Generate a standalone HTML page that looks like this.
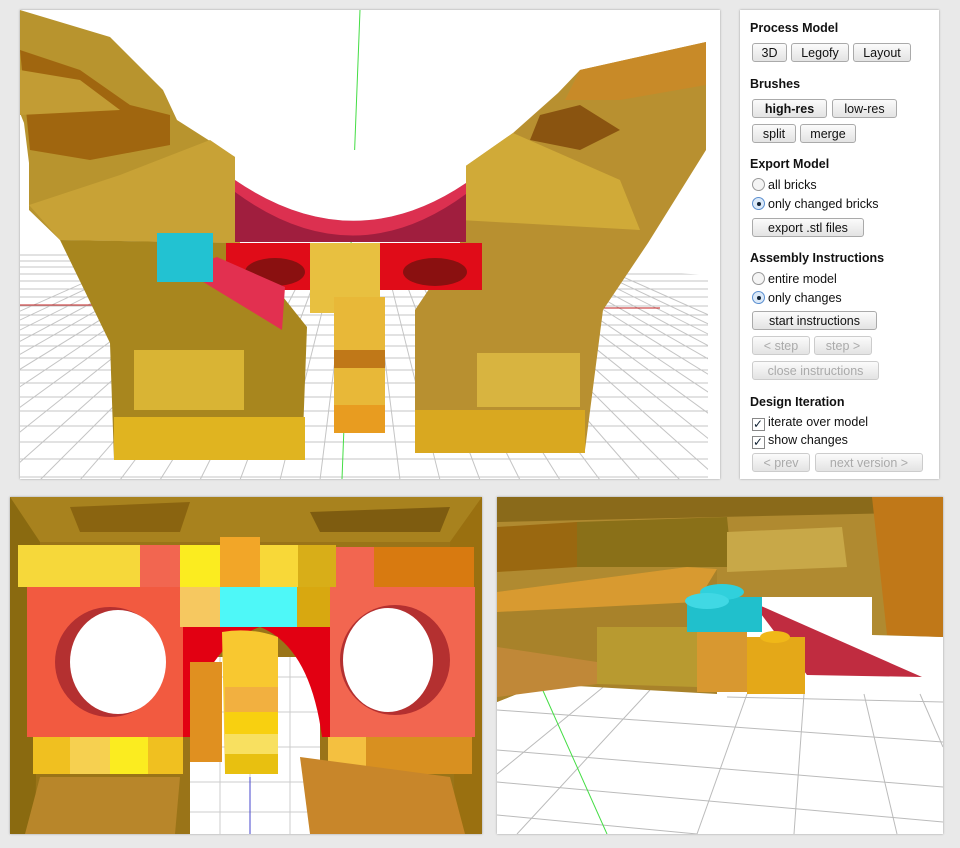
<!DOCTYPE html>
<html><head><style>
body{margin:0;width:960px;height:848px;background:#e9e9e9;position:relative;overflow:hidden;font-family:"Liberation Sans",sans-serif}
.v{position:absolute;background:#fff;overflow:hidden;box-shadow:0 0 2px #999}
.p{position:absolute;left:740px;top:10px;width:199px;height:469px;background:#fff;box-shadow:0 0 2px #999;font-size:12.5px;color:#111}
.p h{display:block;position:absolute;left:10px;font-weight:bold;font-size:12.5px}
.b{position:absolute;height:19px;border:1px solid #aaa;border-radius:3px;background:linear-gradient(#fbfbfb,#e3e3e3);font-size:12.5px;line-height:19px;text-align:center;box-sizing:border-box}
.d{color:#aaa;border-color:#ccc}
.r{position:absolute;left:12px;font-size:12.5px}
.r i{display:inline-block;width:11px;height:11px;border:1px solid #999;border-radius:50%;vertical-align:-2px;margin-right:3px;background:#f4f4f4;position:relative}
.r i.on:after{content:"";position:absolute;left:3.5px;top:3.5px;width:4px;height:4px;border-radius:50%;background:#123}
.r i.on{border-color:#5b8fd0;background:#dbe9f8}
.r s{display:inline-block;width:11px;height:11px;border:1px solid #888;vertical-align:-2px;margin-right:3px;text-decoration:none;font-size:12px;line-height:10px;color:#123}
</style></head><body>
<div class="v" style="left:20px;top:10px;width:700px;height:469px">
<svg width="700" height="469">
<defs><clipPath id="fl"><polygon points="0,240 120,240 600,260 688,265 688,469 0,469"/></clipPath></defs>
<g clip-path="url(#fl)" stroke="#c4c4c4" stroke-width="1">
<line x1="0" y1="245" x2="700" y2="245"/><line x1="0" y1="251" x2="700" y2="251"/><line x1="0" y1="257" x2="700" y2="257"/><line x1="0" y1="264" x2="700" y2="264"/><line x1="0" y1="271" x2="700" y2="271"/><line x1="0" y1="279" x2="700" y2="279"/><line x1="0" y1="287" x2="700" y2="287"/><line x1="0" y1="296" x2="700" y2="296"/><line x1="0" y1="305" x2="700" y2="305"/><line x1="0" y1="315" x2="700" y2="315"/><line x1="0" y1="325" x2="700" y2="325"/><line x1="0" y1="336" x2="700" y2="336"/><line x1="0" y1="348" x2="700" y2="348"/><line x1="0" y1="360" x2="700" y2="360"/><line x1="0" y1="373" x2="700" y2="373"/><line x1="0" y1="387" x2="700" y2="387"/><line x1="0" y1="401" x2="700" y2="401"/><line x1="0" y1="416" x2="700" y2="416"/><line x1="0" y1="432" x2="700" y2="432"/><line x1="0" y1="449" x2="700" y2="449"/><line x1="0" y1="467" x2="700" y2="467"/>
<g transform="translate(340,150)">
<line x1="0" y1="0" x2="-720" y2="320"/><line x1="0" y1="0" x2="-680" y2="320"/><line x1="0" y1="0" x2="-640" y2="320"/><line x1="0" y1="0" x2="-600" y2="320"/><line x1="0" y1="0" x2="-560" y2="320"/><line x1="0" y1="0" x2="-520" y2="320"/><line x1="0" y1="0" x2="-480" y2="320"/><line x1="0" y1="0" x2="-440" y2="320"/><line x1="0" y1="0" x2="-400" y2="320"/><line x1="0" y1="0" x2="-360" y2="320"/><line x1="0" y1="0" x2="-320" y2="320"/><line x1="0" y1="0" x2="-280" y2="320"/><line x1="0" y1="0" x2="-240" y2="320"/><line x1="0" y1="0" x2="-200" y2="320"/><line x1="0" y1="0" x2="-160" y2="320"/><line x1="0" y1="0" x2="-120" y2="320"/><line x1="0" y1="0" x2="-80" y2="320"/><line x1="0" y1="0" x2="-40" y2="320"/><line x1="0" y1="0" x2="40" y2="320"/><line x1="0" y1="0" x2="80" y2="320"/><line x1="0" y1="0" x2="120" y2="320"/><line x1="0" y1="0" x2="160" y2="320"/><line x1="0" y1="0" x2="200" y2="320"/><line x1="0" y1="0" x2="240" y2="320"/><line x1="0" y1="0" x2="280" y2="320"/><line x1="0" y1="0" x2="320" y2="320"/><line x1="0" y1="0" x2="360" y2="320"/><line x1="0" y1="0" x2="400" y2="320"/><line x1="0" y1="0" x2="440" y2="320"/><line x1="0" y1="0" x2="480" y2="320"/><line x1="0" y1="0" x2="520" y2="320"/><line x1="0" y1="0" x2="560" y2="320"/><line x1="0" y1="0" x2="600" y2="320"/><line x1="0" y1="0" x2="640" y2="320"/><line x1="0" y1="0" x2="680" y2="320"/><line x1="0" y1="0" x2="720" y2="320"/></g></g>
<line x1="0" y1="295" x2="90" y2="295" stroke="#c02020"/><line x1="580" y1="298" x2="640" y2="298" stroke="#c02020"/>
<line x1="340" y1="0" x2="322" y2="469" stroke="#4d4" />
<polygon points="0,0 90,27 143,80 157,110 215,147 220,233 40,230 9,200 9,153 4,113 0,103" fill="#b8942e"/>
<polygon points="0,40 60,60 110,95 150,105 150,135 70,150 10,140" fill="#a0660f"/>
<polygon points="0,60 60,70 100,100 0,105" fill="#c29c34"/>
<polygon points="9,195 100,165 190,130 215,147 220,233 40,230" fill="#c8a236"/>
<polygon points="40,230 220,233 287,317 282,450 94,450 90,333" fill="#a8861e"/>
<rect x="114" y="340" width="110" height="60" fill="#d9b434"/>
<rect x="94" y="407" width="191" height="43" fill="#e0b420"/>
<polygon points="560,60 686,32 686,140 628,233 583,300 565,440 395,443 395,300 440,233 440,160 493,123 538,83" fill="#b89030"/>
<polygon points="520,105 560,95 600,120 560,140 510,130" fill="#8a5410"/>
<polygon points="560,60 686,32 686,75 600,90 545,90" fill="#c88a28"/>
<polygon points="440,160 493,123 600,170 620,220 440,210" fill="#d0aa38"/>
<rect x="457" y="343" width="103" height="54" fill="#d8b440"/>
<rect x="395" y="400" width="170" height="43" fill="#d9a820"/>
<polygon points="215,170 446,173 446,232 215,232" fill="#a01e3e"/>
<path d="M215 170 Q332 250 446 173 L446 184 Q332 268 215 182Z" fill="#dc3050"/>
<path d="M215 170 Q332 250 446 173 L446 140 L215 140Z" fill="#fff"/>
<polygon points="206,233 462,233 462,280 206,280" fill="#e00c18"/>
<ellipse cx="255" cy="262" rx="30" ry="14" fill="#8a1010"/><ellipse cx="415" cy="262" rx="32" ry="14" fill="#8a1010"/>
<rect x="290" y="233" width="70" height="70" fill="#e8c040"/>
<rect x="314" y="287" width="51" height="136" fill="#e8b838"/>
<rect x="314" y="340" width="51" height="18" fill="#c07818"/>
<rect x="314" y="395" width="51" height="28" fill="#e89c20"/>
<polygon points="179,253 197,247 265,277 262,320 180,270" fill="#e23050"/>
<rect x="137" y="223" width="56" height="49" fill="#22c2d2"/>
</svg></div>
<div class="p">
<h style="top:11px">Process Model</h>
<div class="b" style="left:12px;top:33px;width:35px">3D</div><div class="b" style="left:51px;top:33px;width:58px">Legofy</div><div class="b" style="left:113px;top:33px;width:58px">Layout</div>
<h style="top:67px">Brushes</h>
<div class="b" style="left:12px;top:89px;width:75px;font-weight:bold">high-res</div><div class="b" style="left:92px;top:89px;width:65px">low-res</div>
<div class="b" style="left:12px;top:114px;width:44px">split</div><div class="b" style="left:60px;top:114px;width:56px">merge</div>
<h style="top:147px">Export Model</h>
<div class="r" style="top:168px"><i></i>all bricks</div>
<div class="r" style="top:187px"><i class="on"></i>only changed bricks</div>
<div class="b" style="left:12px;top:208px;width:112px">export .stl files</div>
<h style="top:241px">Assembly Instructions</h>
<div class="r" style="top:262px"><i></i>entire model</div>
<div class="r" style="top:281px"><i class="on"></i>only changes</div>
<div class="b" style="left:12px;top:301px;width:125px">start instructions</div>
<div class="b d" style="left:12px;top:326px;width:58px">&lt; step</div><div class="b d" style="left:74px;top:326px;width:58px">step &gt;</div>
<div class="b d" style="left:12px;top:351px;width:127px">close instructions</div>
<h style="top:385px">Design Iteration</h>
<div class="r" style="top:405px"><s>✓</s>iterate over model</div>
<div class="r" style="top:423px"><s>✓</s>show changes</div>
<div class="b d" style="left:12px;top:443px;width:58px">&lt; prev</div><div class="b d" style="left:75px;top:443px;width:108px">next version &gt;</div>
</div>
<div class="v" style="left:10px;top:497px;width:472px;height:337px;background:#9a7418">
<svg width="472" height="337">
<polygon points="0,0 472,0 440,45 30,45" fill="#a8821e"/>
<polygon points="60,10 180,5 170,35 70,35" fill="#8a6410"/><polygon points="300,15 440,10 430,35 310,35" fill="#7e5c10"/>
<polygon points="0,0 30,45 25,337 0,337" fill="#8a6a10"/>
<polygon points="472,0 440,45 445,337 472,337" fill="#9a7010"/>
<rect x="180" y="160" width="130" height="177" fill="#fff"/>
<g stroke="#ccc"><line x1="180" y1="180" x2="310" y2="180"/><line x1="180" y1="215" x2="310" y2="215"/><line x1="180" y1="250" x2="310" y2="250"/><line x1="180" y1="285" x2="310" y2="285"/><line x1="180" y1="315" x2="310" y2="315"/><line x1="210" y1="160" x2="210" y2="337"/><line x1="240" y1="160" x2="240" y2="337"/><line x1="280" y1="160" x2="280" y2="337"/></g>
<rect x="8" y="48" width="122" height="42" fill="#f6d83a"/>
<rect x="130" y="48" width="40" height="42" fill="#f26650"/>
<rect x="170" y="48" width="40" height="42" fill="#fbec20"/><rect x="210" y="40" width="40" height="50" fill="#f2a628"/><rect x="250" y="48" width="38" height="42" fill="#f8d838"/><rect x="288" y="48" width="38" height="42" fill="#d8ae18"/>
<rect x="326" y="50" width="38" height="40" fill="#f26650"/><rect x="364" y="50" width="100" height="40" fill="#d87a10"/>
<rect x="17" y="90" width="156" height="150" fill="#f25a40"/>
<ellipse cx="100" cy="165" rx="55" ry="55" fill="#b43030"/><ellipse cx="108" cy="165" rx="48" ry="52" fill="#fff"/>
<rect x="320" y="90" width="145" height="150" fill="#f26650"/>
<ellipse cx="385" cy="163" rx="55" ry="55" fill="#b43030"/><ellipse cx="378" cy="163" rx="45" ry="52" fill="#fff"/>
<rect x="170" y="90" width="40" height="40" fill="#f6c860"/><rect x="287" y="90" width="33" height="40" fill="#d8a810"/>
<rect x="210" y="90" width="77" height="40" fill="#4ef8f8"/>
<path d="M173 130 L320 130 L320 240 L312 240 Q300 150 250 130 Q190 150 180 240 L173 240Z" fill="#e20012"/>
<path d="M212 135 Q240 130 268 140 L268 275 L215 275 Z" fill="#f8c830"/>
<rect x="180" y="165" width="32" height="100" fill="#e09020"/>
<rect x="215" y="190" width="53" height="25" fill="#f2b040"/><rect x="215" y="215" width="53" height="22" fill="#f8d010"/><rect x="215" y="237" width="53" height="20" fill="#f8e060"/><rect x="215" y="257" width="53" height="20" fill="#e8c010"/>
<rect x="23" y="240" width="150" height="37" fill="#f0c020"/><rect x="60" y="240" width="40" height="37" fill="#f6d050"/><rect x="100" y="240" width="38" height="37" fill="#fbec20"/>
<rect x="318" y="240" width="144" height="37" fill="#d89020"/><rect x="318" y="240" width="38" height="37" fill="#f4c040"/>
<polygon points="30,280 170,280 165,337 15,337" fill="#b8862a"/><polygon points="290,260 440,280 455,337 300,337" fill="#c8862a"/>
<line x1="240" y1="280" x2="240" y2="337" stroke="#44c"/>
</svg></div>
<div class="v" style="left:497px;top:497px;width:446px;height:337px">
<svg width="446" height="337">
<polygon points="0,0 446,0 446,140 375,138 375,100 230,100 45,187 0,205" fill="#b08a30"/>
<polygon points="0,0 446,0 446,15 0,25" fill="#8a6a1a"/>
<polygon points="80,25 230,20 235,70 80,70" fill="#8a7018"/>
<polygon points="230,35 345,30 350,70 230,75" fill="#c8a848"/>
<polygon points="375,0 446,0 446,140 390,138" fill="#c07818"/>
<polygon points="0,30 80,25 80,70 0,75" fill="#9a6810"/>
<g stroke="#bbb"><line x1="0" y1="213" x2="446" y2="245"/><line x1="0" y1="253" x2="446" y2="290"/><line x1="0" y1="285" x2="446" y2="325"/><line x1="0" y1="318" x2="200" y2="337"/><line x1="230" y1="200" x2="446" y2="205"/>
<line x1="153" y1="193" x2="20" y2="337"/><line x1="250" y1="197" x2="200" y2="337"/><line x1="307" y1="197" x2="297" y2="337"/><line x1="367" y1="197" x2="400" y2="337"/><line x1="423" y1="197" x2="446" y2="250"/><line x1="110" y1="187" x2="0" y2="277"/></g>
<line x1="43" y1="187" x2="110" y2="337" stroke="#4d4"/>
<polygon points="0,95 190,70 220,72 220,197 45,187 0,205" fill="#a8822a"/>
<polygon points="0,95 190,70 220,72 200,105 0,115" fill="#d89a30"/>
<polygon points="0,150 100,165 100,187 0,200" fill="#c08838"/>
<polygon points="100,130 200,130 200,190 100,187" fill="#b89a30"/>
<polygon points="255,105 425,180 310,178" fill="#c02c40"/>
<rect x="190" y="100" width="75" height="35" fill="#20c0cc"/>
<ellipse cx="225" cy="95" rx="22" ry="8" fill="#30d0dc"/><ellipse cx="210" cy="104" rx="22" ry="8" fill="#40d8e4"/>
<rect x="200" y="135" width="50" height="60" fill="#d89830"/>
<rect x="250" y="140" width="58" height="57" fill="#e4a818"/>
<ellipse cx="278" cy="140" rx="15" ry="6" fill="#f0b818"/>
</svg></div>
</body></html>
